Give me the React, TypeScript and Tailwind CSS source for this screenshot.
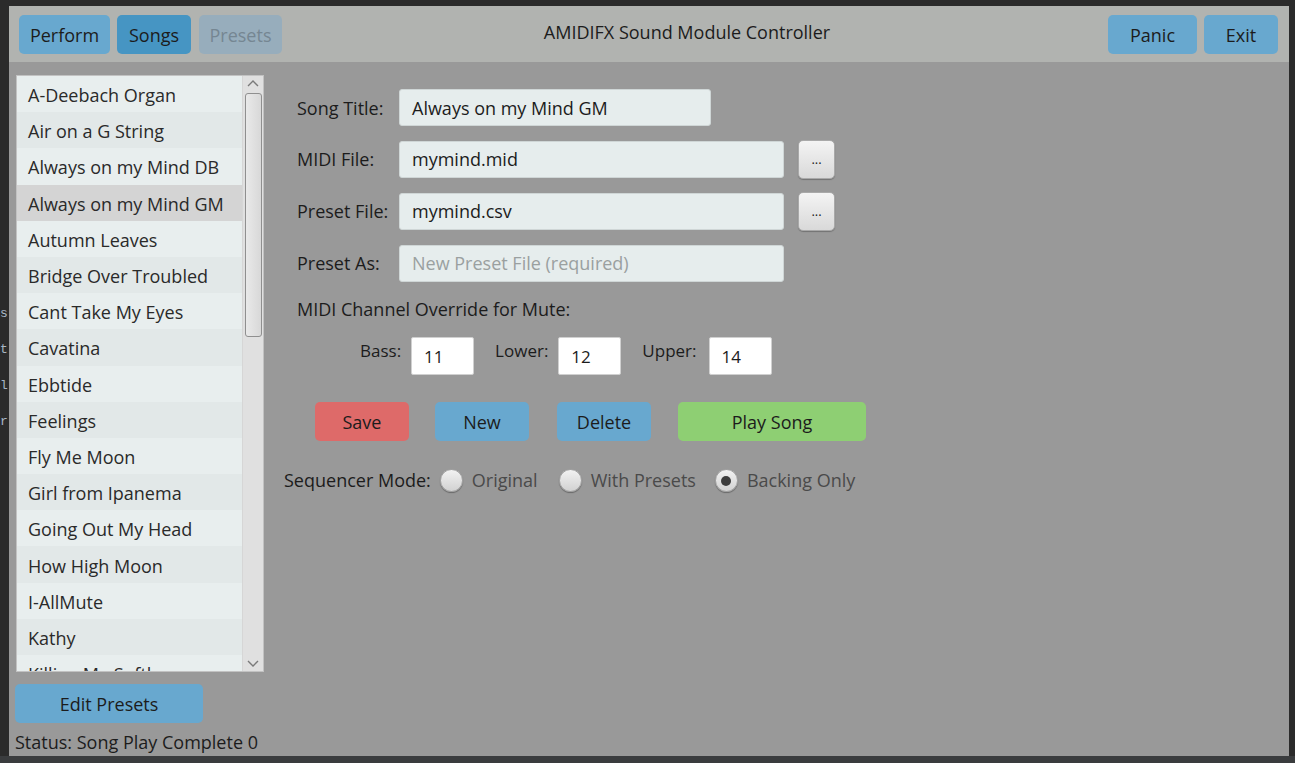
import React, { useState } from 'react';

const songs = [
  'A-Deebach Organ',
  'Air on a G String',
  'Always on my Mind DB',
  'Always on my Mind GM',
  'Autumn Leaves',
  'Bridge Over Troubled',
  'Cant Take My Eyes',
  'Cavatina',
  'Ebbtide',
  'Feelings',
  'Fly Me Moon',
  'Girl from Ipanema',
  'Going Out My Head',
  'How High Moon',
  'I-AllMute',
  'Kathy',
  'Killing Me Softly',
];

const font = { fontFamily: '"Open Sans", "Noto Sans", sans-serif' };

const TopButton: React.FC<{ label: string; className: string }> = ({ label, className }) => (
  <button className={`h-[39px] rounded-[5px] pt-[1px] text-[18px] ${className}`}>{label}</button>
);

const FileButton: React.FC = () => (
  <button className="ml-[14px] h-[39px] w-[37px] rounded-[5px] border border-[#a9a9a9] bg-gradient-to-b from-[#f4f4f4] to-[#d9d9d9] text-[13px] leading-none text-[#222] shadow-[0_1px_1px_rgba(0,0,0,0.25)]">
  ...
  </button>
);

const Radio: React.FC<{ label: string; checked?: boolean; onClick: () => void }> = ({ label, checked, onClick }) => (
  <button onClick={onClick} className="flex items-center">
    <span className="flex h-[23px] w-[23px] items-center justify-center rounded-full border border-[#a3a3a3] bg-gradient-to-b from-[#f2f2f2] to-[#d2d2d2] shadow-[0_1px_1px_rgba(0,0,0,0.3)]">
      {checked && <span className="h-[10px] w-[10px] rounded-full bg-[#3d3d3d]" />}
    </span>
    <span className="ml-[9px] text-[18px] text-[#4a4a4a]">{label}</span>
  </button>
);

const App: React.FC = () => {
  const [selected, setSelected] = useState(3);
  const [mode, setMode] = useState('backing');

  return (
    <div className="flex h-[763px] w-[1295px] flex-col overflow-hidden bg-[#2b2b2b]" style={font}>
      <div className="h-[6px] bg-[#2b2b2b]" />
      <div className="flex">
        <div className="flex w-[9px] flex-col pt-[290px] font-mono text-[13px] leading-[36px] text-[#a9b7c6]">
          <span>s</span>
          <span>t</span>
          <span>l</span>
          <span>r</span>
        </div>

        <div className="flex h-[750px] w-[1280px] flex-col text-[#1c1c1c]">
          {/* header */}
          <div className="flex h-[57px] items-start bg-[#b1b3b0] pl-[10px] pr-[11px] pt-[9px]">
            <div className="flex gap-[7px]">
              <TopButton label="Perform" className="w-[91px] bg-[#68a8cf]" />
              <TopButton label="Songs" className="w-[74px] bg-[#4695c3]" />
              <TopButton label="Presets" className="ml-[1px] w-[83px] bg-[#97adbc] text-[#758692]" />
            </div>
            <div className="flex-1 pr-[16px] pt-[4px] text-center text-[18px]">AMIDIFX Sound Module Controller</div>
            <div className="flex gap-[7px]">
              <TopButton label="Panic" className="w-[89px] bg-[#68a8cf]" />
              <TopButton label="Exit" className="w-[74px] bg-[#68a8cf]" />
            </div>
          </div>

          {/* body */}
          <div className="flex flex-1 bg-[#999999]">
            <div className="flex flex-col pl-[7px] pt-[13px]">
              <div className="flex h-[597px] w-[248px] border border-[#c2c2c2] bg-[#e8eeee]">
                <div className="flex-1 overflow-hidden">
                  {songs.map((s, i) => (
                    <div
                      key={s}
                      onClick={() => setSelected(i)}
                      className={`flex h-[36.2px] items-center whitespace-nowrap pl-[11px] pt-[3px] text-[18px] text-[#2a2a2a] ${
                        i === selected ? 'bg-[#d4d4d4]' : i % 2 === 0 ? 'bg-[#e8eeee]' : 'bg-[#e2e8e8]'
                      }`}
                    >
                      {s}
                    </div>
                  ))}
                </div>
                <div className="flex w-[21px] flex-col items-center border-l border-[#d6d6d6] bg-[#e0e0e0]">
                  <svg width="12" height="10" viewBox="0 0 12 10" className="mt-[3px]">
                    <path d="M1 7 L6 2 L11 7" fill="none" stroke="#7a7a7a" strokeWidth="1.4" />
                  </svg>
                  <div className="mt-[4px] h-[244px] w-[17px] rounded-[3px] border border-[#8f8f8f] bg-gradient-to-r from-[#e9e9e9] to-[#d8d8d8]" />
                  <div className="flex-1" />
                  <svg width="12" height="10" viewBox="0 0 12 10" className="mb-[3px]">
                    <path d="M1 3 L6 8 L11 3" fill="none" stroke="#7a7a7a" strokeWidth="1.4" />
                  </svg>
                </div>
              </div>
              <button className="mt-[12px] h-[39px] w-[188px] -translate-x-[1px] rounded-[5px] pt-[1px] bg-[#68a8cf] text-[18px]">
                Edit Presets
              </button>
              <div className="-ml-[1px] mt-[6px] whitespace-nowrap text-[18px]">Status: Song Play Complete 0</div>
            </div>

            {/* form */}
            <div className="flex flex-col pl-[20px] pt-[27px]">
              <div className="ml-[13px] flex h-[37px] items-center">
                <span className="w-[102px] pt-[1px] text-[18px]">Song Title:</span>
                <div className="flex h-[37px] w-[312px] items-center rounded-[3px] border border-[#cfd6d6] bg-[#e6eded] pl-[12px] pt-[1px] text-[18px]">
                  Always on my Mind GM
                </div>
              </div>
              <div className="ml-[13px] mt-[15px] flex h-[37px] items-center">
                <span className="w-[102px] text-[18px]">MIDI File:</span>
                <div className="flex h-[37px] w-[385px] items-center rounded-[3px] border border-[#cfd6d6] bg-[#e6eded] pl-[12px] text-[18px]">
                  mymind.mid
                </div>
                <FileButton />
              </div>
              <div className="ml-[13px] mt-[15px] flex h-[37px] items-center">
                <span className="w-[102px] text-[18px]">Preset File:</span>
                <div className="flex h-[37px] w-[385px] items-center rounded-[3px] border border-[#cfd6d6] bg-[#e6eded] pl-[12px] text-[18px]">
                  mymind.csv
                </div>
                <FileButton />
              </div>
              <div className="ml-[13px] mt-[15px] flex h-[37px] items-center">
                <span className="w-[102px] text-[18px]">Preset As:</span>
                <div className="flex h-[37px] w-[385px] items-center rounded-[3px] border border-[#cfd6d6] bg-[#e6eded] pl-[12px] text-[18px] text-[#9aa0a0]">
                  New Preset File (required)
                </div>
              </div>

              <div className="ml-[13px] mt-[14px] text-[18px]">MIDI Channel Override for Mute:</div>

              <div className="ml-[76px] mt-[14px] flex h-[38px] items-center">
                <span className="-mt-[10px] text-[17px]">Bass:</span>
                <div className="ml-[10px] flex h-[38px] w-[63px] items-center rounded-[2px] border border-[#d0d0d0] bg-white pl-[12px] pt-[1px] text-[17px]">11</div>
                <span className="-mt-[10px] ml-[21px] text-[17px]">Lower:</span>
                <div className="ml-[10px] flex h-[38px] w-[63px] items-center rounded-[2px] border border-[#d0d0d0] bg-white pl-[12px] pt-[1px] text-[17px]">12</div>
                <span className="-mt-[10px] ml-[21px] text-[17px]">Upper:</span>
                <div className="ml-[12px] flex h-[38px] w-[63px] items-center rounded-[2px] border border-[#d0d0d0] bg-white pl-[12px] pt-[1px] text-[17px]">14</div>
              </div>

              <div className="ml-[31px] mt-[27px] flex h-[39px] items-center">
                <button className="h-[39px] w-[94px] rounded-[5px] bg-[#de6a69] pt-[1px] text-[18px]">Save</button>
                <button className="ml-[26px] h-[39px] w-[94px] rounded-[5px] bg-[#68a8cf] pt-[1px] text-[18px]">New</button>
                <button className="ml-[28px] h-[39px] w-[94px] rounded-[5px] bg-[#68a8cf] pt-[1px] text-[18px]">Delete</button>
                <button className="ml-[27px] h-[39px] w-[188px] rounded-[5px] bg-[#8ecf73] pt-[1px] text-[18px]">Play Song</button>
              </div>

              <div className="mt-[26px] flex items-center">
                <span className="mr-[9px] text-[18px]">Sequencer Mode:</span>
                <Radio label="Original" checked={mode === 'original'} onClick={() => setMode('original')} />
                <div className="w-[21px]" />
                <Radio label="With Presets" checked={mode === 'presets'} onClick={() => setMode('presets')} />
                <div className="w-[19px]" />
                <Radio label="Backing Only" checked={mode === 'backing'} onClick={() => setMode('backing')} />
              </div>
            </div>
          </div>
        </div>

        <div className="flex-1 bg-[#2b2b2b]" />
      </div>
      <div className="flex-1 bg-[#3a3c3e]" />
    </div>
  );
};

export default App;
